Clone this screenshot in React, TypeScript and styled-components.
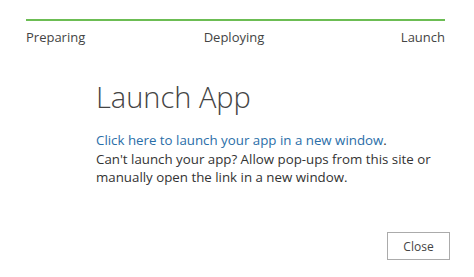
import React from "react";
import styled, { createGlobalStyle } from "styled-components";

const Global = createGlobalStyle`
  html, body { margin: 0; padding: 0; background: #fff; }
  body { font-family: "Open Sans", "Noto Sans", sans-serif; color: #333; }
`;

const Page = styled.div`
  width: 474px;
  height: 277px;
  box-sizing: border-box;
  padding: 19px 29px 0 26px;
  display: flex;
  flex-direction: column;
`;

const Progress = styled.div`
  height: 2px;
  background: #6cbd54;
`;

const Steps = styled.div`
  display: grid;
  grid-template-columns: 1fr auto 1fr;
  margin-top: 7px;
  font-size: 13px;
  line-height: 18px;
  color: #444;
`;

const Step = styled.span<{ $align: "left" | "center" | "right" }>`
  text-align: ${(p) => p.$align};
  margin-right: ${(p) => (p.$align === "center" ? "3px" : "0")};
`;

const Content = styled.div`
  margin: 33px 0 0 70px;
`;

const Title = styled.h1`
  margin: 0;
  font-size: 29px;
  font-weight: 300;
  line-height: 36px;
  color: #444;
`;

const Text = styled.p`
  margin: 16px 0 0;
  font-size: 13.3px;
  line-height: 18.5px;
  color: #333;
`;

const Link = styled.a`
  color: #2a6ea8;
  text-decoration: none;
`;

const Footer = styled.div`
  display: flex;
  justify-content: flex-end;
  margin-top: auto;
  padding-bottom: 17px;
  margin-right: -5px;
`;

const Button = styled.button`
  width: 63px;
  height: 28px;
  background: #fff;
  border: 1px solid #ababab;
  font-family: inherit;
  font-size: 12px;
  color: #444;
  padding: 0;
`;

export default function App() {
  return (
    <>
      <Global />
      <Page>
        <Progress />
        <Steps>
          <Step $align="left">Preparing</Step>
          <Step $align="center">Deploying</Step>
          <Step $align="right">Launch</Step>
        </Steps>
        <Content>
          <Title>Launch App</Title>
          <Text>
            <Link href="#">Click here to launch your app in a new window</Link>.
            <br />
            Can't launch your app? Allow pop-ups from this site or
            <br />
            manually open the link in a new window.
          </Text>
        </Content>
        <Footer>
          <Button>Close</Button>
        </Footer>
      </Page>
    </>
  );
}
